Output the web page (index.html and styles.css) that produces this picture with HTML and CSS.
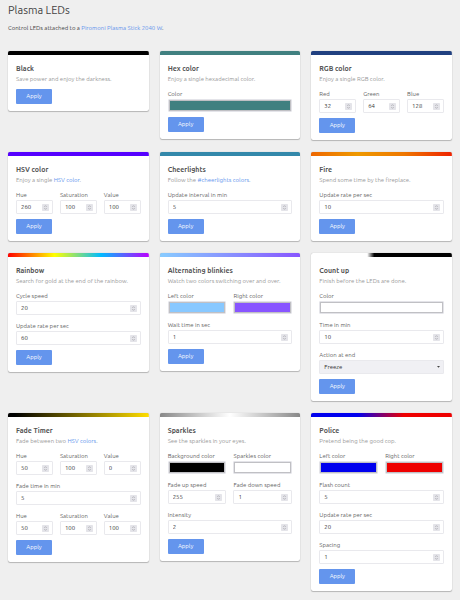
FILE: index.html
```html
<!DOCTYPE html>
<html lang="en">
<head>
<meta charset="utf-8">
<title>Plasma LEDs</title>
<link rel="stylesheet" href="styles.css">
</head>
<body>
<svg class="sprite" aria-hidden="true">
  <symbol id="spin" viewBox="0 0 21 21">
    <rect width="21" height="21" rx="2" fill="#e4e4e9"/>
    <path d="M7 8.5 10.5 5 14 8.5M7 12.5 10.5 16 14 12.5" fill="none" stroke="#9a9aa0" stroke-width="2"/>
  </symbol>
  <symbol id="arrow" viewBox="0 0 9 6"><path d="M0 0H9L4.5 5.5Z" fill="#444"/></symbol>
</svg>
<header>
  <h1>Plasma LEDs</h1>
  <p>Control LEDs attached to a <a href="#stick">Piromoni Plasma Stick 2040 W</a>.</p>
</header>
<main class="cards">
  <form class="card black">
    <h2>Black</h2>
    <p>Save power and enjoy the darkness.</p>
    <button type="button">Apply</button>
  </form>

  <form class="card hex">
    <h2>Hex color</h2>
    <p>Enjoy a single hexadecimal color.</p>
    <div class="fields">
      <div class="row"><label>Color<input type="color" value="#408080"></label></div>
    </div>
    <button type="button">Apply</button>
  </form>

  <form class="card rgb">
    <h2>RGB color</h2>
    <p>Enjoy a single RGB color.</p>
    <div class="fields">
      <div class="row">
        <label>Red<span class="number"><input type="number" value="32"><svg><use href="#spin"/></svg></span></label>
        <label>Green<span class="number"><input type="number" value="64"><svg><use href="#spin"/></svg></span></label>
        <label>Blue<span class="number"><input type="number" value="128"><svg><use href="#spin"/></svg></span></label>
      </div>
    </div>
    <button type="button">Apply</button>
  </form>

  <form class="card hsv">
    <h2>HSV color</h2>
    <p>Enjoy a single <a href="#hsv">HSV color</a>.</p>
    <div class="fields">
      <div class="row">
        <label>Hue<span class="number"><input type="number" value="260"><svg><use href="#spin"/></svg></span></label>
        <label>Saturation<span class="number"><input type="number" value="100"><svg><use href="#spin"/></svg></span></label>
        <label>Value<span class="number"><input type="number" value="100"><svg><use href="#spin"/></svg></span></label>
      </div>
    </div>
    <button type="button">Apply</button>
  </form>

  <form class="card cheerlights">
    <h2>Cheerlights</h2>
    <p>Follow the <a href="#cheerlights">#cheerlights colors</a>.</p>
    <div class="fields">
      <div class="row"><label>Update interval in min<span class="number"><input type="number" value="5"><svg><use href="#spin"/></svg></span></label></div>
    </div>
    <button type="button">Apply</button>
  </form>

  <form class="card fire">
    <h2>Fire</h2>
    <p>Spend some time by the fireplace.</p>
    <div class="fields">
      <div class="row"><label>Update rate per sec<span class="number"><input type="number" value="10"><svg><use href="#spin"/></svg></span></label></div>
    </div>
    <button type="button">Apply</button>
  </form>

  <form class="card rainbow">
    <h2>Rainbow</h2>
    <p>Search for gold at the end of the rainbow.</p>
    <div class="fields">
      <div class="row"><label>Cycle speed<span class="number"><input type="number" value="20"><svg><use href="#spin"/></svg></span></label></div>
      <div class="row"><label>Update rate per sec<span class="number"><input type="number" value="60"><svg><use href="#spin"/></svg></span></label></div>
    </div>
    <button type="button">Apply</button>
  </form>

  <form class="card blinkies">
    <h2>Alternating blinkies</h2>
    <p>Watch two colors switching over and over.</p>
    <div class="fields">
      <div class="row">
        <label>Left color<input type="color" value="#88c8ff"></label>
        <label>Right color<input type="color" value="#8855ff"></label>
      </div>
      <div class="row"><label>Wait time in sec<span class="number"><input type="number" value="1"><svg><use href="#spin"/></svg></span></label></div>
    </div>
    <button type="button">Apply</button>
  </form>

  <form class="card countup">
    <h2>Count up</h2>
    <p>Finish before the LEDs are done.</p>
    <div class="fields">
      <div class="row"><label>Color<input type="color" value="#ffffff"></label></div>
      <div class="row"><label>Time in min<span class="number"><input type="number" value="10"><svg><use href="#spin"/></svg></span></label></div>
      <div class="row"><label>Action at end<span class="choice"><select><option>Freeze</option></select><svg><use href="#arrow"/></svg></span></label></div>
    </div>
    <button type="button">Apply</button>
  </form>

  <form class="card fade">
    <h2>Fade Timer</h2>
    <p>Fade between two <a href="#hsv">HSV colors</a>.</p>
    <div class="fields">
      <div class="row">
        <label>Hue<span class="number"><input type="number" value="50"><svg><use href="#spin"/></svg></span></label>
        <label>Saturation<span class="number"><input type="number" value="100"><svg><use href="#spin"/></svg></span></label>
        <label>Value<span class="number"><input type="number" value="0"><svg><use href="#spin"/></svg></span></label>
      </div>
      <div class="row"><label>Fade time in min<span class="number"><input type="number" value="5"><svg><use href="#spin"/></svg></span></label></div>
      <div class="row">
        <label>Hue<span class="number"><input type="number" value="50"><svg><use href="#spin"/></svg></span></label>
        <label>Saturation<span class="number"><input type="number" value="100"><svg><use href="#spin"/></svg></span></label>
        <label>Value<span class="number"><input type="number" value="100"><svg><use href="#spin"/></svg></span></label>
      </div>
    </div>
    <button type="button">Apply</button>
  </form>

  <form class="card sparkles">
    <h2>Sparkles</h2>
    <p>See the sparkles in your eyes.</p>
    <div class="fields">
      <div class="row">
        <label>Background color<input type="color" value="#000000"></label>
        <label>Sparkles color<input type="color" value="#ffffff"></label>
      </div>
      <div class="row">
        <label>Fade up speed<span class="number"><input type="number" value="255"><svg><use href="#spin"/></svg></span></label>
        <label>Fade down speed<span class="number"><input type="number" value="1"><svg><use href="#spin"/></svg></span></label>
      </div>
      <div class="row"><label>Intensity<span class="number"><input type="number" value="2"><svg><use href="#spin"/></svg></span></label></div>
    </div>
    <button type="button">Apply</button>
  </form>

  <form class="card police">
    <h2>Police</h2>
    <p>Pretend being the good cop.</p>
    <div class="fields">
      <div class="row">
        <label>Left color<input type="color" value="#0000ee"></label>
        <label>Right color<input type="color" value="#ee0000"></label>
      </div>
      <div class="row"><label>Flash count<span class="number"><input type="number" value="5"><svg><use href="#spin"/></svg></span></label></div>
      <div class="row"><label>Update rate per sec<span class="number"><input type="number" value="20"><svg><use href="#spin"/></svg></span></label></div>
      <div class="row"><label>Spacing<span class="number"><input type="number" value="1"><svg><use href="#spin"/></svg></span></label></div>
    </div>
    <button type="button">Apply</button>
  </form>
</main>
</body>
</html>
```
FILE: styles.css
```css
* {
  box-sizing: border-box;
}

body {
  margin: 0;
  padding: 3px 8px 8px;
  background: #efefef;
  color: #444;
  font: 6px/10px Ubuntu, "Noto Sans", sans-serif;
}

.sprite {
  display: none;
}

h1, h2, p {
  margin: 0;
  font-weight: 400;
}

h1 {
  font-size: 11px;
  line-height: 14px;
}

header {
  padding-bottom: 18px;
}

header p {
  margin-top: 6px;
}

a {
  color: #6495ed;
  text-decoration: none;
}

.cards {
  display: grid;
  grid-template-columns: repeat(3, minmax(0, 1fr));
  gap: 12px 11px;
  align-items: start;
}

.card {
  --stripe: #000;
  padding: 12px 8px 7px;
  border-radius: 2px;
  background: var(--stripe) top / 100% 4px no-repeat, #fff;
  box-shadow: 0 0 1px rgba(0, 0, 0, .3), 0 1px 1px rgba(0, 0, 0, .22);
}

.black { --stripe: linear-gradient(#000, #000); }
.hex { --stripe: linear-gradient(#408080, #408080); }
.rgb { --stripe: linear-gradient(#204080, #204080); }
.hsv { --stripe: linear-gradient(#5500ff, #5500ff); }
.cheerlights { --stripe: linear-gradient(#3388aa, #3388aa); }
.fire { --stripe: linear-gradient(90deg, #e60, #e90 33%, #e70 66%, #e20); }
.rainbow { --stripe: linear-gradient(90deg, #f00, #ff0 33%, #0bf 66%, #b0f); }
.blinkies { --stripe: linear-gradient(90deg, #8cf, #85f); }
.countup { --stripe: linear-gradient(90deg, #fff 40%, #000 45%); }
.fade { --stripe: linear-gradient(90deg, #000 5%, #fd0); }
.sparkles { --stripe: linear-gradient(90deg, #888, #fff 50%, #888); }
.police { --stripe: linear-gradient(90deg, #00e 33%, #e00 66%); }

h2 {
  color: #555;
  font-size: 7px;
  font-weight: 600;
}

.card p {
  color: #999;
  line-height: 11px;
}

.fields {
  display: grid;
  gap: 6px;
  margin-top: 5px;
}

.row {
  display: grid;
  grid-auto-flow: column;
  grid-auto-columns: minmax(0, 1fr);
  gap: 7px;
}

label {
  display: block;
  color: #666;
  white-space: nowrap;
}

.number, .choice {
  display: block;
  position: relative;
}

input, select {
  display: block;
  width: 100%;
  height: 14px;
  margin: 0;
  padding: 0 4px 1px;
  border: 1px solid #e9e9ed;
  border-radius: 1px;
  background: #fff;
  color: #333;
  font: inherit;
  appearance: none;
}

input::-webkit-inner-spin-button {
  display: none;
}

select {
  background: #f0f0f4;
}

.number svg, .choice svg {
  position: absolute;
  pointer-events: none;
}

.number svg {
  top: 4px;
  right: 4px;
  width: 7px;
  height: 7px;
}

.choice svg {
  top: 6px;
  right: 4px;
  width: 3px;
  height: 2px;
}

input[type="color"] {
  height: 13px;
  padding: 0;
  border-color: #e4e4e9;
  background: #e4e4e9;
}

input::-webkit-color-swatch-wrapper {
  padding: 0;
}

input::-webkit-color-swatch {
  border: 1px solid #c0c0c4;
  border-radius: 0;
}

button {
  display: block;
  width: 36px;
  height: 15px;
  margin-top: 5px;
  padding: 0 0 1px;
  border: 0;
  border-radius: 1px;
  background: #6495ed;
  color: #fff;
  font: inherit;
}
```
